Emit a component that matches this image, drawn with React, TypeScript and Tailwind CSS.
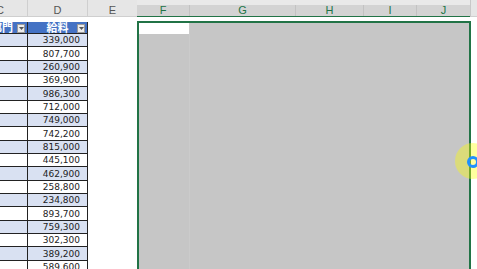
const vals = [
  "339,000","807,700","260,900","369,900","986,300","712,000","749,000","742,200","815,000",
  "445,100","462,900","258,800","234,800","893,700","759,300","302,300","389,200","589,600",
];
const heights = ["h-[13px]", "h-[14px]", "h-[13px]"];

function Dropdown() {
  return (
    <div className="absolute right-[2px] top-[2px] w-[8px] h-[9px] bg-[#ececec] border border-[#9a9a9a] flex items-center justify-center">
      <svg width="5" height="3" viewBox="0 0 5 3"><path d="M0 0 H5 L2.5 3 Z" fill="#555" /></svg>
    </div>
  );
}

export default function App() {
  const headerFont = { fontFamily: '"Liberation Sans", Arial, sans-serif' };
  return (
    <div className="relative w-[477px] h-[269px] overflow-hidden bg-white">
      {/* column headers */}
      <div className="flex h-[17px] text-[11px] leading-none bg-[#e6e6e6]" style={headerFont}>
        <div className="ml-[-27px] w-[55px] shrink-0 flex items-center justify-center pt-[5px] text-[#555] border-r border-[#cfcfcf] border-b border-b-[#cfcfcf]">C</div>
        <div className="w-[60px] shrink-0 flex items-center justify-center pt-[5px] text-[#555] border-r border-[#cfcfcf] border-b border-b-[#cfcfcf]">D</div>
        <div className="w-[49px] shrink-0 flex items-center justify-center pt-[5px] text-[#555] border-b border-[#cfcfcf]">E</div>
        <div className="flex flex-col w-[333px] shrink-0">
          <div className="h-[5px] bg-[#e9e9e9]" />
          <div className="flex flex-1 bg-[#d3d3d3] text-[#217346] border-b border-[#217346]">
            <div className="w-[53px] flex items-center justify-center border-r border-[#c2c2c2]">F</div>
            <div className="w-[106px] flex items-center justify-center border-r border-[#c2c2c2]">G</div>
            <div className="w-[68px] flex items-center justify-center border-r border-[#c2c2c2]">H</div>
            <div className="w-[53px] flex items-center justify-center border-r border-[#c2c2c2]">I</div>
            <div className="w-[53px] flex items-center justify-center">J</div>
          </div>
        </div>
        <div className="flex-1 border-l border-[#c8c8c8] border-b border-b-[#cfcfcf]" />
      </div>

      {/* body */}
      <div className="flex">
        {/* table columns C, D and blank E */}
        <div className="flex flex-col shrink-0 ml-[-27px] w-[164px]">
          <div className="h-[5px]" />
          <div className="flex h-[12px] text-white text-[11px] leading-none font-bold" style={{ fontFamily: '"Noto Sans CJK JP", sans-serif' }}>
            <div className="relative w-[55px] bg-[#4472c4] border-r border-b border-[#222] flex items-center justify-center pl-[4px] overflow-hidden">
              部門
              <Dropdown />
            </div>
            <div className="relative w-[60px] bg-[#4472c4] border-r border-b border-[#222] flex items-center justify-center">
              給料
              <Dropdown />
            </div>
            <div className="flex-1 bg-white" />
          </div>
          {vals.map((v, i) => (
            <div key={v} className={`flex ${heights[i % 3]}`}>
              <div className={`flex w-[115px] border-b border-[#222] ${i % 2 === 0 ? "bg-[#d9e1f2]" : "bg-white"}`}>
                <div className="w-[55px] border-r border-[#222]" />
                <div
                  className="w-[60px] border-r border-[#222] flex items-end justify-end pr-[7px] pb-[1px] text-[9px] leading-[10px] text-[#222]"
                  style={{ fontFamily: '"DejaVu Sans", sans-serif' }}
                >
                  {v}
                </div>
              </div>
            </div>
          ))}
        </div>

        {/* gray selection/shape area */}
        <div className="flex flex-col shrink-0 w-[334px]">
          <div className="h-[4px]" />
          <div className="h-[260px] bg-[#c6c6c6] border-2 border-[#217346] flex">
            <div className="w-[51px] flex flex-col border-r border-[#cbcbcb]">
              <div className="h-[11px] bg-white" />
            </div>
          </div>
        </div>
        <div className="flex-1" />
      </div>

      {/* cursor highlight */}
      <div className="absolute left-[455px] top-[143px] w-[36px] h-[36px] rounded-full bg-[rgba(255,255,0,0.38)]" />
      <div className="absolute left-[467px] top-[156px] w-[12px] h-[12px] rounded-full border-[3px] border-[#1e90ff]" />
    </div>
  );
}
